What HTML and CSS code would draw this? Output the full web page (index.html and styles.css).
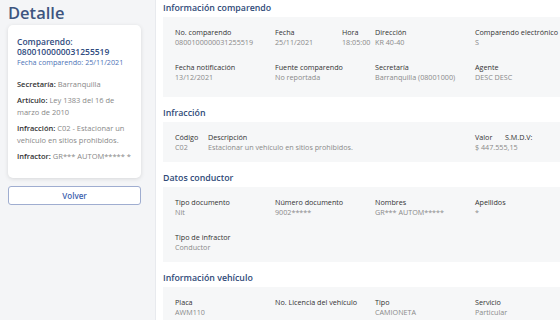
FILE: index.html
```html
<!DOCTYPE html>
<html lang="es">
<head>
    <meta charset="UTF-8">
    <meta name="viewport" content="width=device-width, initial-scale=1.0">
    <title>Detalle comparendo</title>
    <link rel="stylesheet" href="styles.css">
</head>
<body>
    <div class="layout">
        <aside class="sidebar">
            <h1>Detalle</h1>
            <div class="card">
                <div class="card-title">Comparendo: 0800100000031255519</div>
                <div class="card-date">Fecha comparendo: 25/11/2021</div>
                <p><strong>Secretaría:</strong> Barranquilla</p>
                <p><strong>Artículo:</strong> Ley 1383 del 16 de marzo de 2010</p>
                <p><strong>Infracción:</strong> C02 - Estacionar un vehículo en sitios prohibidos.</p>
                <p><strong>Infractor:</strong> GR*** AUTOM***** *</p>
            </div>
            <button class="btn-back">Volver</button>
        </aside>

        <main class="content">
            <section>
                <h2>Información comparendo</h2>
                <div class="box box-first">
                    <div class="field"><span class="label">No. comparendo</span><span class="value">0800100000031255519</span></div>
                    <div class="split">
                        <div class="field"><span class="label">Fecha</span><span class="value">25/11/2021</span></div>
                        <div class="field"><span class="label">Hora</span><span class="value">18:05:00</span></div>
                    </div>
                    <div class="field"><span class="label">Dirección</span><span class="value">KR 40-40</span></div>
                    <div class="field"><span class="label">Comparendo electrónico</span><span class="value">S</span></div>
                    <div class="field"><span class="label">Fecha notificación</span><span class="value">13/12/2021</span></div>
                    <div class="field"><span class="label">Fuente comparendo</span><span class="value">No reportada</span></div>
                    <div class="field"><span class="label">Secretaría</span><span class="value">Barranquilla (08001000)</span></div>
                    <div class="field"><span class="label">Agente</span><span class="value">DESC DESC</span></div>
                </div>
            </section>

            <section>
                <h2>Infracción</h2>
                <div class="box infraction">
                    <div class="field"><span class="label">Código</span><span class="value">C02</span></div>
                    <div class="field"><span class="label">Descripción</span><span class="value">Estacionar un vehículo en sitios prohibidos.</span></div>
                    <div class="field"><span class="label">Valor</span><span class="value">$ 447.555,15</span></div>
                    <div class="field"><span class="label">S.M.D.V:</span><span class="value"></span></div>
                </div>
            </section>

            <section>
                <h2>Datos conductor</h2>
                <div class="box">
                    <div class="field"><span class="label">Tipo documento</span><span class="value">Nit</span></div>
                    <div class="field"><span class="label">Número documento</span><span class="value">9002*****</span></div>
                    <div class="field"><span class="label">Nombres</span><span class="value">GR*** AUTOM*****</span></div>
                    <div class="field"><span class="label">Apellidos</span><span class="value">*</span></div>
                    <div class="field"><span class="label">Tipo de infractor</span><span class="value">Conductor</span></div>
                </div>
            </section>

            <section>
                <h2>Información vehículo</h2>
                <div class="box">
                    <div class="field"><span class="label">Placa</span><span class="value">AWM110</span></div>
                    <div class="field"><span class="label">No. Licencia del vehículo</span><span class="value"></span></div>
                    <div class="field"><span class="label">Tipo</span><span class="value">CAMIONETA</span></div>
                    <div class="field"><span class="label">Servicio</span><span class="value">Particular</span></div>
                </div>
            </section>
        </main>
    </div>
</body>
</html>
```

FILE: styles.css
```css
body {
    font-family: "Open Sans", "Noto Sans", sans-serif;
    margin: 0;
    background-color: #f4f5f7;
    color: #333;
    overflow: hidden;
}
.layout {
    display: flex;
    height: 320px;
}
.sidebar {
    width: 133px;
    padding: 0 14px 0 8px;
    flex-shrink: 0;
}
h1 {
    font-size: 16.5px;
    font-weight: 600;
    color: #3e5580;
    margin: 3px 0 2px;
    line-height: 20px;
}
.card {
    background-color: #fff;
    border-radius: 5px;
    box-shadow: 0 1px 4px rgba(0, 0, 0, 0.12);
    padding: 12px 9px 13px;
}
.card-title {
    font-size: 8.5px;
    font-weight: 600;
    color: #2f4b7e;
    line-height: 10px;
}
.card-date {
    font-size: 7.2px;
    color: #4d73b6;
    line-height: 10px;
    margin-bottom: 11px;
}
.card p {
    font-size: 7.5px;
    line-height: 12.5px;
    color: #888;
    margin: 0 0 3px;
}
.card p strong {
    font-weight: 600;
    color: #333;
}
.btn-back {
    display: block;
    width: 100%;
    margin-top: 8px;
    height: 19px;
    padding: 0;
    background-color: #fff;
    border: 1px solid #9fadd0;
    border-radius: 3px;
    color: #3d5fae;
    font-family: inherit;
    font-size: 8px;
    font-weight: 600;
    cursor: pointer;
}
.content {
    flex: 1;
    background-color: #fff;
    border-left: 1px solid #e8eaee;
    padding: 0 5px 0 7px;
}
h2 {
    font-size: 8.8px;
    font-weight: 600;
    color: #2f4a78;
    line-height: 12px;
    margin: 10px 0 3px;
}
section:first-child h2 {
    margin-top: 2px;
}
.box {
    background-color: #f6f7f8;
    padding: 10px 12px 9px;
    display: grid;
    grid-template-columns: 100px 100px 100px 1fr;
    row-gap: 14px;
}
.box-first {
    padding-bottom: 14px;
}
.split {
    display: grid;
    grid-template-columns: 67px 1fr;
}
.infraction {
    grid-template-columns: 33px 267px 30px 1fr;
}
.field {
    display: flex;
    flex-direction: column;
    white-space: nowrap;
}
.label {
    font-size: 7.2px;
    line-height: 10px;
    color: #333;
}
.value {
    font-size: 7.2px;
    line-height: 11px;
    color: #8a8a8a;
    min-height: 11px;
}
```
